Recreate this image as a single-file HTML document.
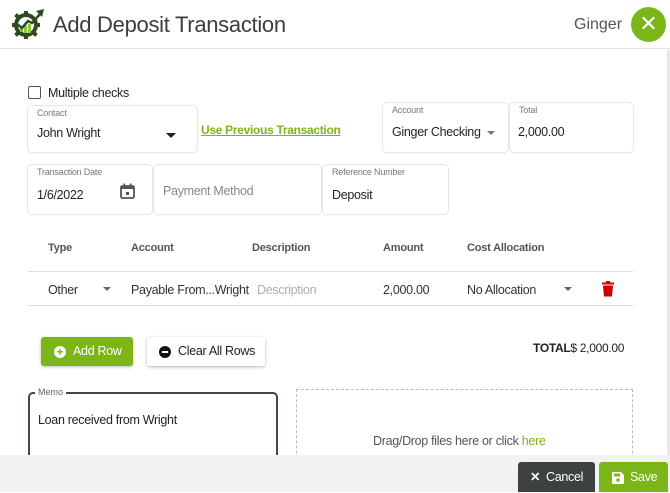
<!DOCTYPE html>
<html><head><meta charset="utf-8"><style>
*{box-sizing:border-box;margin:0;padding:0}
body{width:670px;height:492px;overflow:hidden;background:#fff;font-family:"Liberation Sans",sans-serif;color:#333;position:relative}
.a{position:absolute}
.box{position:absolute;border-radius:4px;box-shadow:0 0 0 1px #e6e6e6,0 1px 2px rgba(0,0,0,.06);background:#fff}
.lbl{position:absolute;font-size:9px;color:#777;top:2px;left:9px;letter-spacing:-.2px}
.val{position:absolute;font-size:12.5px;color:#222;letter-spacing:-.3px}
.car{position:absolute;width:0;height:0;border-left:5px solid transparent;border-right:5px solid transparent;border-top:5px solid #222}
.th{position:absolute;top:242px;font-size:11px;font-weight:bold;color:#555;letter-spacing:-.2px}
.td{position:absolute;top:283px;font-size:12.5px;color:#333;letter-spacing:-.3px}
</style></head><body>
<svg class="a" style="left:9px;top:7px" width="38" height="32" viewBox="0 0 38 32">
<circle cx="17" cy="18" r="12" fill="#2f4a22"/>
<g fill="#2f4a22"><rect x="15" y="4" width="4" height="4"/><rect x="15" y="28" width="4" height="4"/><rect x="3" y="16" width="4" height="4"/><rect x="27" y="16" width="4" height="4"/><rect x="6" y="7" width="4" height="4" transform="rotate(45 8 9)"/><rect x="24" y="25" width="4" height="4" transform="rotate(45 26 27)"/><rect x="6" y="25" width="4" height="4" transform="rotate(45 8 27)"/></g>
<circle cx="17" cy="18" r="8" fill="#fff"/>
<path d="M11 19v6h3v-5zM15 18v8h3v-7zM19 17v9h3v-9z" fill="#8cc63f"/>
<path d="M8 17l5 4 6-7 4 2 9-10" stroke="#2f4a22" stroke-width="2.5" fill="none"/>
<path d="M27 4l8-2-2 8z" fill="#2f4a22"/>
</svg>
<div class="a" style="left:53px;top:12px;font-size:22px;color:#3d3d3d;letter-spacing:-.3px">Add Deposit Transaction</div>
<div class="a" style="left:574px;top:16px;font-size:16px;color:#555">Ginger</div>
<div class="a" style="left:631px;top:7px;width:35px;height:35px;border-radius:50%;background:#7cb518;color:#fff;font-size:22px;text-align:center;line-height:34px">✕</div>
<div class="a" style="left:0;top:48px;width:670px;height:1px;background:#e2e2e2"></div>
<div class="a" style="left:667px;top:50px;width:3px;height:405px;background:#e8e8e8"></div>

<div class="a" style="left:28px;top:86px;width:13px;height:13px;border:1.5px solid #555;border-radius:2px"></div>
<div class="a" style="left:48px;top:86px;font-size:12.5px;color:#222;letter-spacing:-.3px">Multiple checks</div>

<div class="box" style="left:28px;top:106px;width:169px;height:46px"><span class="lbl">Contact</span><span class="val" style="left:9px;top:20px">John Wright</span><span class="car" style="left:138px;top:27px"></span></div>
<div class="a" style="left:201px;top:123px;font-size:12px;font-weight:bold;color:#7cb518;text-decoration:underline;letter-spacing:-.3px">Use Previous Transaction</div>
<div class="box" style="left:383px;top:103px;width:125px;height:49px"><span class="lbl">Account</span><span class="val" style="left:9px;top:22px">Ginger Checking</span><span class="car" style="left:104px;top:28px;border-top-color:#777;border-width:4px 4px 0 4px"></span></div>
<div class="box" style="left:510px;top:103px;width:123px;height:49px"><span class="lbl">Total</span><span class="val" style="left:8px;top:22px">2,000.00</span></div>

<div class="box" style="left:28px;top:165px;width:124px;height:49px"><span class="lbl">Transaction Date</span><span class="val" style="left:9px;top:23px">1/6/2022</span>
<svg class="a" style="left:92px;top:18px" width="15" height="16" viewBox="0 0 15 16"><rect x="1" y="3" width="13" height="12" rx="1.5" fill="none" stroke="#555" stroke-width="1.8"/><rect x="1" y="3" width="13" height="3" fill="#555"/><rect x="3.5" y="0.5" width="1.8" height="3" fill="#555"/><rect x="9.7" y="0.5" width="1.8" height="3" fill="#555"/><rect x="6" y="9" width="3" height="3" fill="#555"/></svg></div>
<div class="box" style="left:154px;top:165px;width:167px;height:49px"><span class="val" style="left:9px;top:19px;color:#888">Payment Method</span></div>
<div class="box" style="left:323px;top:165px;width:125px;height:49px"><span class="lbl">Reference Number</span><span class="val" style="left:9px;top:23px">Deposit</span></div>

<div class="th" style="left:48px">Type</div>
<div class="th" style="left:131px">Account</div>
<div class="th" style="left:252px">Description</div>
<div class="th" style="left:383px">Amount</div>
<div class="th" style="left:467px">Cost Allocation</div>
<div class="a" style="left:28px;top:271px;width:605px;height:1px;background:#ddd"></div>
<div class="td" style="left:48px">Other</div><span class="car" style="left:103px;top:287px;border-top-color:#666;border-width:4px 4px 0 4px"></span>
<div class="td" style="left:131px">Payable From...Wright</div>
<div class="td" style="left:257px;color:#aab">Description</div>
<div class="td" style="left:383px">2,000.00</div>
<div class="td" style="left:467px">No Allocation</div><span class="car" style="left:564px;top:287px;border-top-color:#666;border-width:4px 4px 0 4px"></span>
<svg class="a" style="left:602px;top:281px" width="12" height="16" viewBox="0 0 12 16"><rect x="0" y="1.5" width="12" height="2" fill="#c00"/><rect x="4" y="0" width="4" height="2" fill="#c00"/><path d="M1 4.5h10l-1 11H2z" fill="#c00"/></svg>
<div class="a" style="left:28px;top:305px;width:605px;height:1px;background:#ddd"></div>

<div class="a" style="left:41px;top:337px;width:92px;height:29px;background:#7cb518;border-radius:3px;box-shadow:0 1px 3px rgba(0,0,0,.25);color:#fff;font-size:12.5px;line-height:29px;letter-spacing:-.3px"><span style="position:absolute;left:13px;top:9px;width:12px;height:12px;border-radius:50%;background:#fff"></span><span style="position:absolute;left:13px;top:8px;width:12px;text-align:center;color:#7cb518;font-weight:bold;font-size:12px;line-height:14px">+</span><span style="position:absolute;left:32px">Add Row</span></div>
<div class="a" style="left:147px;top:337px;width:118px;height:29px;background:#fff;border-radius:3px;box-shadow:0 1px 3px rgba(0,0,0,.3);color:#222;font-size:12.5px;line-height:29px;letter-spacing:-.3px"><span style="position:absolute;left:12px;top:9px;width:12px;height:12px;border-radius:50%;background:#111"></span><span style="position:absolute;left:15px;top:14px;width:6px;height:2px;background:#fff"></span><span style="position:absolute;left:31px">Clear All Rows</span></div>
<div class="a" style="left:533px;top:341px;font-size:12px;color:#222;letter-spacing:-.3px"><b>TOTAL</b>$ 2,000.00</div>

<div class="a" style="left:28px;top:392px;width:250px;height:80px;border:2px solid #3d4d3d;border-radius:5px"></div>
<div class="a" style="left:35px;top:387px;background:#fff;padding:0 3px;font-size:9px;color:#666">Memo</div>
<div class="a" style="left:38px;top:413px;font-size:12.5px;color:#222;letter-spacing:-.3px">Loan received from Wright</div>
<div class="a" style="left:296px;top:389px;width:337px;height:80px;border:1.5px dashed #bbb"></div>
<div class="a" style="left:373px;top:434px;font-size:12.5px;color:#555;letter-spacing:-.3px">Drag/Drop files here or click <span style="color:#7cb518">here</span></div>

<div class="a" style="left:0;top:455px;width:670px;height:37px;background:#f2f2f2"></div>
<div class="a" style="left:518px;top:462px;width:77px;height:30px;background:#3d4142;border-radius:3px 3px 0 0;color:#fff;font-size:12.5px;line-height:31px;letter-spacing:-.3px"><span style="position:absolute;left:12px;font-weight:bold">✕</span><span style="position:absolute;left:28px">Cancel</span></div>
<div class="a" style="left:599px;top:462px;width:69px;height:30px;background:#7cb518;border-radius:3px 3px 0 0;color:#fff;font-size:12.5px;line-height:31px;letter-spacing:-.3px">
<svg style="position:absolute;left:13px;top:10px" width="12" height="12" viewBox="0 0 12 12"><path d="M0 1.5A1.5 1.5 0 0 1 1.5 0H9l3 3v7.5A1.5 1.5 0 0 1 10.5 12h-9A1.5 1.5 0 0 1 0 10.5z" fill="#fff"/><rect x="2" y="1.5" width="6" height="3" fill="#7cb518"/><circle cx="6" cy="8" r="1.8" fill="#7cb518"/></svg>
<span style="position:absolute;left:31px">Save</span></div>
</body></html>
